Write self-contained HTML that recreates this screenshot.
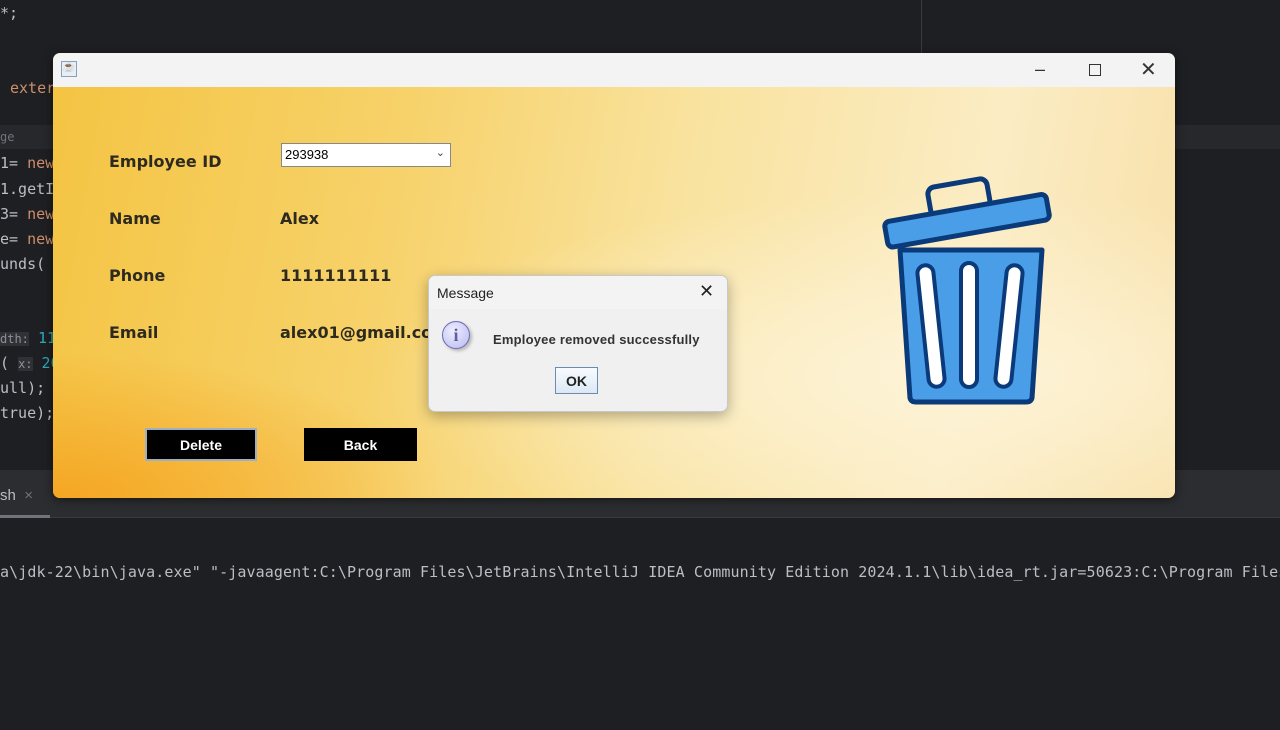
<!DOCTYPE html>
<html><head><style>
body{margin:0;width:1280px;height:730px;background:#1e1f22;position:relative;overflow:hidden;font-family:"Liberation Sans",sans-serif}
.code{position:absolute;font-family:"DejaVu Sans Mono","Liberation Mono",monospace;font-size:15px;color:#bcbec4;white-space:pre}
.a{position:absolute}
.lbl{position:absolute;font-weight:bold;font-size:16px;color:#2d2a20;font-family:"DejaVu Sans",sans-serif}
</style></head><body>
<div class="a" style="left:921px;top:0;width:1px;height:53px;background:#393b40"></div>
<div class="a" style="left:0;top:125px;width:60px;height:24px;background:#26282c"></div>
<div class="a" style="left:1175px;top:125px;width:105px;height:24px;background:#26282c"></div>
<div class="code" style="left:0;top:4px">*;</div>
<div class="code" style="left:10px;top:79px;color:#cf8e6d">exter</div>
<div class="code" style="left:0;top:130px;font-size:12px;color:#6f737a">ge</div>
<div class="code" style="left:0;top:154px">1= <span style="color:#cf8e6d">new</span></div>
<div class="code" style="left:0;top:180px">1.getI</div>
<div class="code" style="left:0;top:205px">3= <span style="color:#cf8e6d">new</span></div>
<div class="code" style="left:0;top:230px">e= <span style="color:#cf8e6d">new</span></div>
<div class="code" style="left:0;top:255px">unds(</div>
<div class="code" style="left:0;top:329px"><span style="background:#2f3136;color:#8c8f94;font-size:12px">dth:</span> <span style="color:#2aacb8">117</span></div>
<div class="code" style="left:0;top:354px">( <span style="background:#2f3136;color:#8c8f94;font-size:12px">x:</span> <span style="color:#2aacb8">20</span></div>
<div class="code" style="left:0;top:379px">ull);</div>
<div class="code" style="left:0;top:404px">true);</div>
<div class="a" style="left:0;top:470px;width:1280px;height:47px;background:#2b2d30"></div>
<div class="a" style="left:0;top:517px;width:1280px;height:1px;background:#393b40"></div>
<div class="a" style="left:0;top:515px;width:50px;height:3px;background:#6f737a"></div>
<div class="code" style="left:0;top:487px;font-family:'Liberation Sans',sans-serif">sh  <span style="color:#6f737a">×</span></div>
<div class="code" style="left:0;top:563px;letter-spacing:0.1px">a\jdk-22\bin\java.exe" "-javaagent:C:\Program Files\JetBrains\IntelliJ IDEA Community Edition 2024.1.1\lib\idea_rt.jar=50623:C:\Program Files</div>

<div class="a" style="left:53px;top:53px;width:1122px;height:445px;border-radius:7px;overflow:hidden;box-shadow:0 2px 10px rgba(0,0,0,.5)">
 <div class="a" style="left:0;top:0;width:1122px;height:34px;background:#f3f3f3"></div>
 <div class="a" style="left:8px;top:8px;width:16px;height:16px;border:1px solid #8aa0b8;background:#e8eef5;box-sizing:border-box;font-size:10px;text-align:center;color:#d06020">☕</div>
 <div class="a" style="left:982px;top:6px;font-size:18px;color:#333">–</div>
 <div class="a" style="left:1036px;top:11px;width:10px;height:10px;border:1px solid #333"></div>
 <div class="a" style="left:1087px;top:4px;font-size:20px;color:#333">✕</div>
 <div class="a" style="left:0;top:34px;width:1122px;height:411px;background:radial-gradient(ellipse at 0% 100%,#f5a623 0%,rgba(245,166,35,0) 25%),radial-gradient(ellipse at 80% 70%,#fdf3d6 0%,rgba(253,243,214,0) 45%),linear-gradient(100deg,#f4c443 0%,#f7d26a 30%,#f9e3a0 55%,#fbecc4 80%,#f8e0a8 100%)"></div>
</div>
<div class="lbl" style="left:109px;top:152px">Employee ID</div>
<div class="lbl" style="left:109px;top:209px">Name</div>
<div class="lbl" style="left:109px;top:266px">Phone</div>
<div class="lbl" style="left:109px;top:323px">Email</div>
<div class="lbl" style="left:280px;top:209px">Alex</div>
<div class="lbl" style="left:280px;top:266px">1111111111</div>
<div class="lbl" style="left:280px;top:323px">alex01@gmail.co</div>
<div class="a" style="left:281px;top:143px;width:170px;height:24px;background:#fff;border:1px solid #888;box-sizing:border-box;font-size:13px;padding:3px 3px">293938<span style="position:absolute;right:5px;top:2px;font-size:11px;color:#444">&#8964;</span></div>
<div class="a" style="left:145px;top:428px;width:112px;height:33px;background:#000;border:2px solid #9bb0c4;box-sizing:border-box;color:#fff;font-weight:bold;font-size:14px;text-align:center;line-height:31px">Delete</div>
<div class="a" style="left:304px;top:428px;width:113px;height:33px;background:#000;color:#fff;font-weight:bold;font-size:14px;text-align:center;line-height:35px">Back</div>
<svg class="a" style="left:870px;top:170px" width="190" height="245" viewBox="0 0 190 245">
 <g transform="rotate(-10 95 45)" stroke="#0b3a7a" stroke-width="5" fill="#4a9ee8">
  <rect x="62" y="12" width="60" height="30" rx="7" fill="none"/>
  <rect x="14" y="38" width="164" height="26" rx="5"/>
 </g>
 <path d="M30 80 L172 80 L162 228 Q161 232 156 232 L46 232 Q41 232 40 228 Z" fill="#4a9ee8" stroke="#0b3a7a" stroke-width="5" stroke-linejoin="round"/>
 <g fill="#fff" stroke="#0b3a7a" stroke-width="4">
  <rect x="53" y="95" width="16" height="122" rx="8" transform="rotate(-6 61 156)"/>
  <rect x="91" y="93" width="16" height="124" rx="8"/>
  <rect x="131" y="95" width="16" height="122" rx="8" transform="rotate(6 139 156)"/>
 </g>
</svg>
<div class="a" style="left:428px;top:275px;width:298px;height:135px;background:#f0f0f0;border:1px solid #c8c8c8;border-radius:7px;box-shadow:0 4px 14px rgba(0,0,0,.3);overflow:hidden">
 <div class="a" style="left:0;top:0;width:298px;height:33px;background:#f3f3f3"></div>
 <div class="a" style="left:8px;top:9px;font-size:14px;color:#222">Message</div>
 <div class="a" style="left:270px;top:5px;font-size:18px;color:#222">✕</div>
 <div class="a" style="left:13px;top:45px;width:26px;height:26px;border-radius:50%;background:radial-gradient(circle at 40% 35%,#eeeeff,#b8b8f0);border:1px solid #6a6ab0;box-shadow:2px 2px 3px rgba(0,0,0,.25);text-align:center;font:bold 18px 'Liberation Serif',serif;color:#6060a0;line-height:26px">i</div>
 <div class="a" style="left:64px;top:56px;font-size:13px;font-weight:bold;color:#333;letter-spacing:0.2px">Employee removed successfully</div>
 <div class="a" style="left:126px;top:91px;width:43px;height:27px;border:1px solid #6b8bb0;background:linear-gradient(#f8fbff,#dce8f4);box-sizing:border-box;text-align:center;line-height:27px;font-weight:bold;font-size:14px;color:#222">OK</div>
</div>
</body></html>
